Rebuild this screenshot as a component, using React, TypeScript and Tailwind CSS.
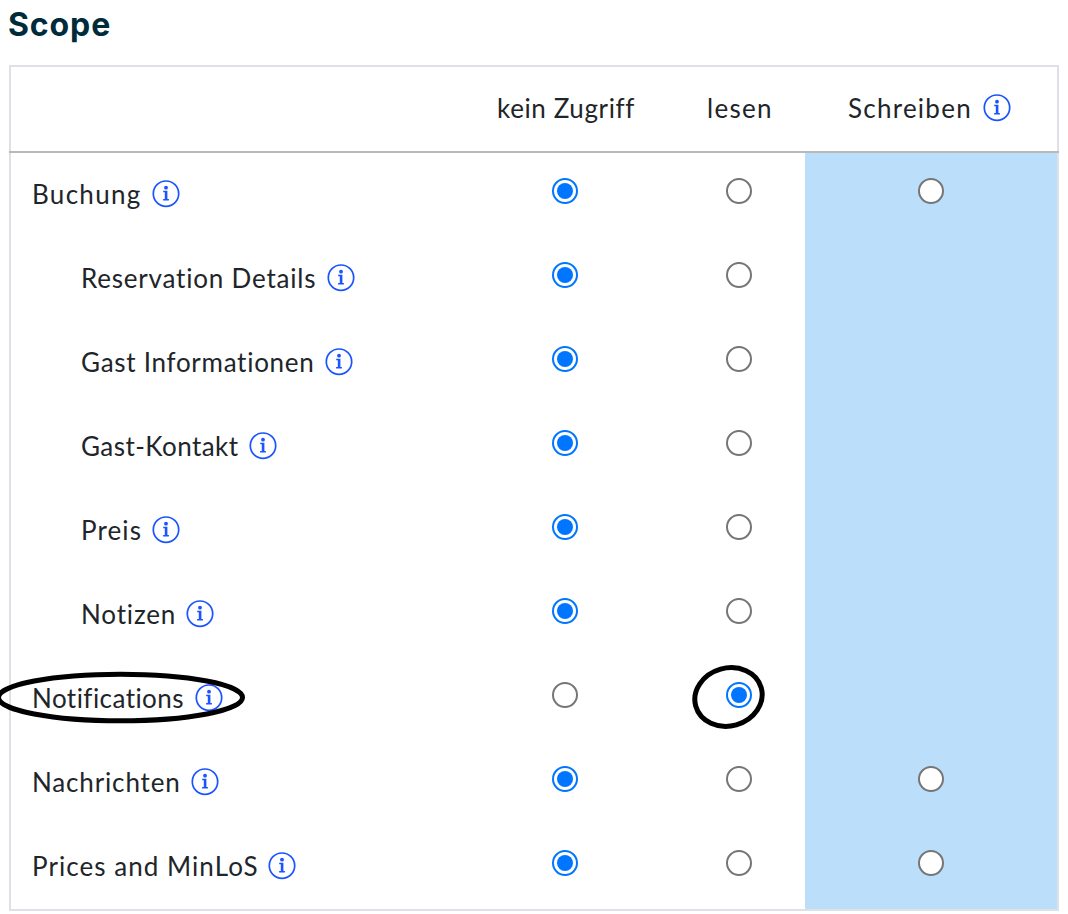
import React from 'react';
import clsx from 'clsx';

type Access = 'none' | 'read' | 'write';

interface ScopeRow {
  label: string;
  labelClass: string;
  child?: boolean;
  value: Access;
  writable?: boolean;
}

const rows: ScopeRow[] = [
  { label: 'Buchung', labelClass: 'w-[120px] tracking-[1.3px]', value: 'none', writable: true },
  { label: 'Reservation Details', labelClass: 'w-[246px] tracking-[0.8px]', child: true, value: 'none' },
  { label: 'Gast Informationen', labelClass: 'w-[244px] tracking-[0.72px]', child: true, value: 'none' },
  { label: 'Gast-Kontakt', labelClass: 'w-[168px] tracking-[0.45px]', child: true, value: 'none' },
  { label: 'Preis', labelClass: 'w-[71px] tracking-[1.1px]', child: true, value: 'none' },
  { label: 'Notizen', labelClass: 'w-[105px] tracking-[0.85px]', child: true, value: 'none' },
  { label: 'Notifications', labelClass: 'w-[163px] tracking-[0.45px]', value: 'read' },
  { label: 'Nachrichten', labelClass: 'w-[159px] tracking-[0.85px]', value: 'none', writable: true },
  { label: 'Prices and MinLoS', labelClass: 'w-[236px] tracking-[1.05px]', value: 'none', writable: true },
];

const InfoIcon: React.FC = () => (
  <svg className="mt-[27px] size-7 shrink-0 text-[#1a54ff]" viewBox="0 0 28 28" fill="none">
    <circle cx="14" cy="13.7" r="12.7" stroke="currentColor" strokeWidth="1.7" />
    <circle cx="14" cy="7.7" r="1.9" fill="currentColor" />
    <path d="M11.2 10.8h4.2v8.3h1.5v1.5h-5.8v-1.5h1.7v-6.8h-1.6z" fill="currentColor" />
  </svg>
);

const Radio: React.FC<{ checked: boolean; name: string }> = ({ checked, name }) => (
  <span
    role="radio"
    aria-checked={checked}
    aria-label={name}
    className={clsx(
      'mt-[25px] flex size-[26px] items-center justify-center rounded-full border-2 bg-white',
      checked ? 'border-[#0075ff]' : 'border-[#767676]'
    )}
  >
    {checked && <span className="size-4 rounded-full bg-[#0075ff]" />}
  </span>
);

const App: React.FC = () => {
  return (
    <div className="relative h-[914px] w-[1068px] overflow-hidden bg-white font-['Lato',sans-serif] text-[26px] text-[#212529]">
      <h1 className="h-[65px] pl-[8px] font-['Inter',sans-serif] text-[32px] leading-[49px] font-bold tracking-[0.9px] text-[#002b3a]">
        Scope
      </h1>

      <div className="ml-[9px] h-[846px] w-[1050px] border-2 border-[#dee2e6]">
        <div className="-mx-0.5 grid h-[86px] grid-cols-[448px_216px_132px_254px] border-b-2 border-[#b9b9b9] leading-[82px]">
          <div />
          <div className="pl-0.5 text-center tracking-[0.6px]">kein Zugriff</div>
          <div className="pl-0.5 text-center tracking-[1.3px]">lesen</div>
          <div className="flex pl-[43px]">
            <span className="w-[134.5px] whitespace-nowrap tracking-[1.25px]">Schreiben</span>
            <InfoIcon />
          </div>
        </div>

        {rows.map((row) => (
          <div key={row.label} className="grid h-[84px] grid-cols-[446px_216px_132px_252px] leading-[82px]">
            <div className={clsx('flex', row.child ? 'pl-[70px]' : 'pl-[21px]')}>
              <span className={clsx('shrink-0 whitespace-nowrap', row.labelClass)}>{row.label}</span>
              <InfoIcon />
            </div>
            <div className="flex justify-center">
              <Radio checked={row.value === 'none'} name="kein Zugriff" />
            </div>
            <div className="flex justify-center">
              <Radio checked={row.value === 'read'} name="lesen" />
            </div>
            <div className="flex justify-center bg-[#bbdefb]">
              {row.writable && <Radio checked={row.value === 'write'} name="Schreiben" />}
            </div>
          </div>
        ))}
      </div>

      {/* hand-drawn markers around the Notifications row */}
      <svg className="absolute top-[660px] left-0 h-[80px] w-[260px]" viewBox="0 0 260 80" fill="none">
        <ellipse cx="120.5" cy="37.5" rx="122" ry="23.3" stroke="#000" strokeWidth="5" />
      </svg>
      <svg className="absolute top-[660px] left-[685px] h-[80px] w-[90px]" viewBox="0 0 90 80" fill="none">
        <ellipse cx="43.5" cy="37" rx="34" ry="28.9" transform="rotate(-15.8 43.5 37)" stroke="#000" strokeWidth="5" />
      </svg>
    </div>
  );
};

export default App;
